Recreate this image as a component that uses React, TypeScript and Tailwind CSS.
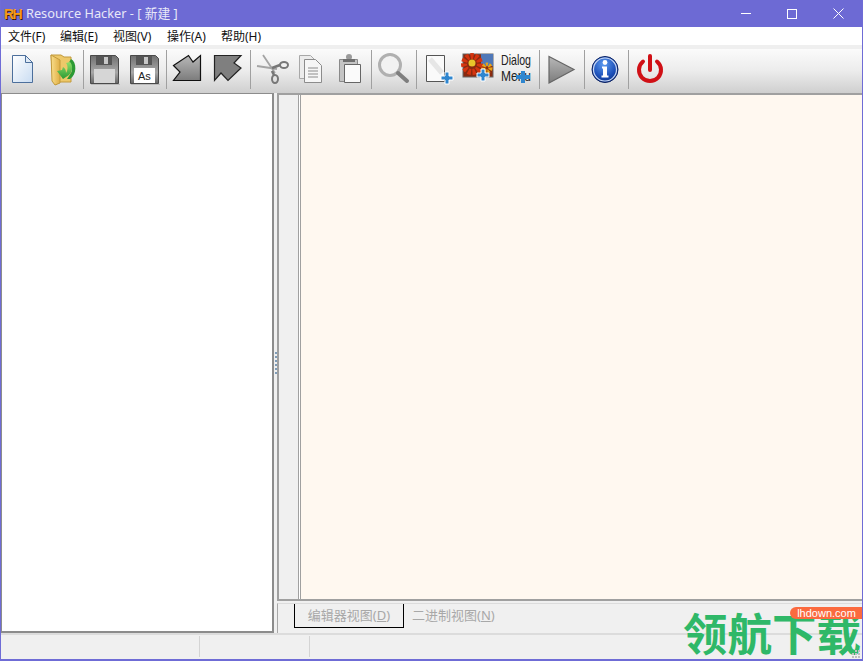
import type { ReactNode } from 'react'

const cjk = '"Noto Sans", "Noto Sans CJK SC", sans-serif'

function Defs() {
  return (
    <svg width="0" height="0" className="absolute">
      <defs>
        <linearGradient id="paper" x1="0" y1="0" x2="1" y2="1">
          <stop offset="0" stopColor="#ffffff" />
          <stop offset="1" stopColor="#c9dcf2" />
        </linearGradient>
        <linearGradient id="metal" x1="0" y1="0" x2="0" y2="1">
          <stop offset="0" stopColor="#b8b8b8" />
          <stop offset="1" stopColor="#7c7c7c" />
        </linearGradient>
        <linearGradient id="floppy" x1="0" y1="0" x2="0" y2="1">
          <stop offset="0" stopColor="#6f6f6f" />
          <stop offset="0.6" stopColor="#a8a8a8" />
          <stop offset="1" stopColor="#666" />
        </linearGradient>
        <linearGradient id="folder" x1="0" y1="0" x2="1" y2="0">
          <stop offset="0" stopColor="#f9de8c" />
          <stop offset="1" stopColor="#e0ae45" />
        </linearGradient>
        <radialGradient id="info" cx="0.45" cy="0.3" r="0.8">
          <stop offset="0" stopColor="#5d9bf0" />
          <stop offset="0.6" stopColor="#1c4fb8" />
          <stop offset="1" stopColor="#0a2a78" />
        </radialGradient>
        <linearGradient id="arrowgreen" x1="0" y1="0" x2="0" y2="1">
          <stop offset="0" stopColor="#8fe06a" />
          <stop offset="1" stopColor="#2c9a34" />
        </linearGradient>
      </defs>
    </svg>
  )
}

function Plus({ x, y }: { x: number; y: number }) {
  return (
    <path
      d={`M${x + 4} ${y}h4v4h4v4h-4v4h-4v-4h-4v-4h4z`}
      fill="#2f86cf"
      stroke="#fff"
      strokeWidth="1"
    />
  )
}

function Icon({ children }: { children: ReactNode }) {
  return (
    <svg width="36" height="36" viewBox="0 0 36 36" className="overflow-visible">
      {children}
    </svg>
  )
}

const NewIcon = () => (
  <Icon>
    <path d="M8.500 4.500h13l7 7v20h-20z" fill="url(#paper)" stroke="#4c6f9c" />
    <path d="M21.500 4.500v7h7z" fill="#dfeaf6" stroke="#4c6f9c" />
  </Icon>
)

const OpenIcon = () => (
  <Icon>
    <path d="M7 4h10l3 2h7v25H15l-3 3-3-4z" fill="#edc869" stroke="#c29a3c" />
    <path d="M7 4l9 5v23l-5 2-3-4z" fill="url(#folder)" stroke="#c29a3c" />
    <path d="M27 8c6 3 6 16-1 20h-3l4-6c2-3 1-8-3-9z" fill="#2c9a34" />
    <path d="M26 11c3 3 3 9-1 13l-6 4-6-8 5-1 1-3c2 1 3 3 3 6 2-3 2-8 0-10z" fill="url(#arrowgreen)" />
  </Icon>
)

const SaveIcon = ({ as }: { as?: boolean }) => (
  <Icon>
    <g transform="translate(-1 0)">
      <path d="M4.500 4.500h25l3 3v25h-28z" fill="url(#floppy)" stroke="#4a4a4a" />
      <path d="M10 5h16v9H10z" fill="#565656" />
      <path d="M18 6h4v7h-4z" fill="#c8c8c8" />
      {as ? (
        <>
          <rect x="8" y="17" width="21" height="15" fill="#fff" />
          <text x="12" y="29" fontSize="11" fontFamily="Liberation Sans" fill="#222">
            As
          </text>
        </>
      ) : (
        <rect x="8" y="18" width="21" height="14" fill="#d6d6d6" />
      )}
      <path d="M5 33.500h29" stroke="#bbb" />
    </g>
  </Icon>
)

const ImportIcon = () => (
  <Icon>
    <path
      d="M3.500 14.500 L18.500 4.500 L23 11 L30.500 4.500 L30.500 29.500 L3.500 29.500 L10 21 Z"
      fill="url(#metal)"
      stroke="#111"
      strokeWidth="1.200"
    />
  </Icon>
)

const ExportIcon = () => (
  <Icon>
    <path
      d="M4.500 4.500 L31 4.500 L24 12 L31 17 L18 29.500 L11 22 L4.500 29.500 Z"
      fill="#7f7f7f"
      stroke="#222"
      strokeWidth="1.200"
    />
  </Icon>
)

const CutIcon = () => (
  <Icon>
    <path d="M3 15l20 3M9 4l12 18" stroke="#a4a4a4" strokeWidth="1.800" fill="none" />
    <path d="M18 17l8-3M18 20l2 4" stroke="#777" strokeWidth="2.600" fill="none" />
    <ellipse cx="30" cy="14" rx="4" ry="3" fill="none" stroke="#777" strokeWidth="2" />
    <ellipse cx="21" cy="28" rx="3" ry="4" fill="none" stroke="#777" strokeWidth="2" />
  </Icon>
)

const CopyIcon = () => (
  <Icon>
    <path d="M6.500 4.500h11l4 4v19h-15z" fill="#ececec" stroke="#a8a8a8" />
    <path d="M11.500 8.500h11l6 6v17h-17z" fill="#f6f6f6" stroke="#8c8c8c" />
    <path d="M15 17h10M15 20h10M15 23h10M15 26h10" stroke="#8c8c8c" />
  </Icon>
)

const PasteIcon = () => (
  <Icon>
    <path d="M7.500 8.500h18v22h-18z" fill="#c4c4c4" stroke="#8a8a8a" />
    <circle cx="17" cy="6" r="3" fill="#9a9a9a" />
    <path d="M11 8h12v3H11z" fill="#6f6f6f" />
    <path d="M12.500 13.500h16v18h-16z" fill="#fafafa" stroke="#666" />
  </Icon>
)

const FindIcon = () => (
  <Icon>
    <circle cx="14" cy="14" r="10.500" fill="#f2f2f2" stroke="#b0b0b0" strokeWidth="3" />
    <path d="M22 22l9 8" stroke="#7e7e7e" strokeWidth="4" strokeLinecap="round" />
  </Icon>
)

const AddBlankIcon = () => (
  <Icon>
    <path d="M6.500 4.500h18v26h-18z" fill="#fafafa" stroke="#555" />
    <path d="M10 8l12 14" stroke="#e6e6e6" strokeWidth="5" />
    <Plus x={21} y={21} />
  </Icon>
)

const AddImageIcon = () => (
  <Icon>
    <rect x="3" y="3" width="30" height="23" fill="#8a2a10" stroke="#666" />
    <rect x="21" y="3" width="12" height="12" fill="#4f78b8" />
    <circle cx="12" cy="13" r="8" fill="none" stroke="#d5340f" strokeWidth="6" strokeDasharray="3 1.500" />
    <circle cx="12" cy="12" r="3.500" fill="#e8c52a" />
    <circle cx="27" cy="17" r="3.500" fill="none" stroke="#e9a314" strokeWidth="4" strokeDasharray="2 1" />
    <Plus x={17} y={18} />
  </Icon>
)

const AddDialogIcon = () => (
  <svg width="36" height="36" viewBox="0 0 36 36" className="overflow-visible">
    <g fontFamily="Liberation Sans" fill="#222">
      <text x="1" y="14" fontSize="15" textLength="30" lengthAdjust="spacingAndGlyphs">
        Dialog
      </text>
      <text x="1" y="30" fontSize="15" textLength="30" lengthAdjust="spacingAndGlyphs">
        Menu
      </text>
    </g>
    <path d="M21 20h4v4h5v4h-5v4h-4v-4h-5v-4h5z" fill="#2f86cf" />
  </svg>
)

const RunIcon = () => (
  <Icon>
    <path d="M5 5.500L30 18.500 5 32z" fill="url(#metal)" stroke="#666" strokeWidth="1.200" />
  </Icon>
)

const InfoIcon = () => (
  <Icon>
    <g transform="translate(-1 0)">
      <circle cx="18" cy="18.500" r="13" fill="url(#info)" stroke="#0b2060" />
      <circle cx="18" cy="18.500" r="11.500" fill="none" stroke="#c9d8f4" strokeWidth="1.200" />
      <circle cx="18" cy="11.500" r="2.400" fill="#fff" />
      <path d="M15 15.500h5v9h1.500v2h-7v-2H16v-7h-1z" fill="#fff" />
    </g>
  </Icon>
)

const PowerIcon = () => (
  <Icon>
    <path
      d="M11 10.500a11 11 0 1 0 14 0"
      fill="none"
      stroke="#d01016"
      strokeWidth="4"
      strokeLinecap="round"
    />
    <path d="M18 5v14" stroke="#d01016" strokeWidth="4" strokeLinecap="round" />
  </Icon>
)

function Tool({ children, w = 'w-[40px]' }: { children: ReactNode; w?: string }) {
  return <div className={`${w} h-[40px] flex items-center justify-center shrink-0`}>{children}</div>
}

function Sep({ w = 'w-[3px]' }: { w?: string }) {
  return (
    <div className={`${w} h-[39px] flex justify-center shrink-0`}>
      <div className="w-px h-full bg-[#a0a0a0]" />
    </div>
  )
}

export default function App() {
  return (
    <div
      className="relative w-[863px] h-[661px] flex flex-col overflow-hidden border border-[#6f6cd6] border-t-0 bg-[#f0f0f0]"
      style={{ fontFamily: cjk }}
    >
      <Defs />
      {/* title bar */}
      <div className="h-[27px] flex items-center bg-[#6d6ad4] text-white shrink-0">
        <span
          className="ml-[3px] w-[22px] text-[14px] leading-none font-bold text-[#f59a1c] tracking-[-1.500px]"
          style={{ fontFamily: '"Liberation Sans", sans-serif', textShadow: '1px 1px 0 #3a1a00' }}
        >
          RH
        </span>
        <span className="text-[12.750px] text-[#e8e8f8]">Resource Hacker - [ 新建 ]</span>
        <div className="ml-auto flex items-center text-white">
          <div className="w-[46px] h-[27px] flex items-center justify-center">
            <div className="w-[10px] h-px bg-white" />
          </div>
          <div className="w-[46px] h-[27px] flex items-center justify-center">
            <div className="w-[10px] h-[10px] border border-white" />
          </div>
          <div className="w-[46px] h-[27px] flex items-center justify-center mr-[1px]">
            <svg width="11" height="11" viewBox="0 0 11 11" stroke="white">
              <path d="M0.500 0.500l10 10M10.500 0.500l-10 10" />
            </svg>
          </div>
        </div>
      </div>

      {/* menu */}
      <div className="h-[18px] pt-[2px] flex items-center bg-white text-[12px] text-[#111] shrink-0">
        <span className="ml-[7px] w-[52px]">文件(F)</span>
        <span className="w-[53px]">编辑(E)</span>
        <span className="w-[54px]">视图(V)</span>
        <span className="w-[54px]">操作(A)</span>
        <span>帮助(H)</span>
      </div>

      {/* toolbar */}
      <div className="h-[47px] flex flex-col shrink-0">
        <div className="h-[4px] bg-[#efefef] shrink-0" />
        <div className="flex-1 flex items-center pl-px pb-[4px] bg-gradient-to-b from-[#fbfbfb] via-[#ececec] to-[#cfcfcf]">
          <Tool><NewIcon /></Tool>
          <Tool><OpenIcon /></Tool>
          <Sep />
          <Tool><SaveIcon /></Tool>
          <Tool><SaveIcon as /></Tool>
          <Sep />
          <Tool><ImportIcon /></Tool>
          <Tool><ExportIcon /></Tool>
          <Sep w="w-[4px]" />
          <Tool w="w-[39px]"><CutIcon /></Tool>
          <Tool w="w-[39px]"><CopyIcon /></Tool>
          <Tool w="w-[39px]"><PasteIcon /></Tool>
          <Sep w="w-[5px]" />
          <Tool><FindIcon /></Tool>
          <Sep w="w-[4px]" />
          <Tool><AddBlankIcon /></Tool>
          <Tool><AddImageIcon /></Tool>
          <Tool w="w-[39px]"><AddDialogIcon /></Tool>
          <Sep w="w-[5px]" />
          <Tool><RunIcon /></Tool>
          <Sep w="w-[4px]" />
          <Tool><InfoIcon /></Tool>
          <Sep w="w-[4px]" />
          <Tool><PowerIcon /></Tool>
        </div>
      </div>

      {/* main panes */}
      <div className="flex-1 flex min-h-0 pt-px">
        <div className="w-[273px] bg-white border-r-2 border-b-2 border-t border-l border-[#8c8c8c] shrink-0" />
        <div className="w-[3px] flex flex-col items-center justify-center gap-[2px] shrink-0">
          {[0, 1, 2, 3, 4, 5].map((i) => (
            <div key={i} className="w-[2px] h-[2px] bg-[#7f9db9]" />
          ))}
        </div>
        <div className="flex-1 flex flex-col min-w-0">
          <div className="h-[508px] flex border-t-2 border-b-2 border-[#a0a0a0] shrink-0">
            <div className="w-[21px] bg-[#f0f0f0] border-l-2 border-[#a0a0a0] shrink-0" />
            <div className="w-[1px] bg-[#a0a0a0] shrink-0" />
            <div className="w-px bg-white shrink-0" />
            <div className="flex-1 bg-[#fff8f0] border-l border-[#a0a0a0]" />
          </div>
          <div className="flex-1 border-l border-[#a8a8a8] mt-[2px] border-t border-t-[#dcdcdc] flex items-start text-[13px] text-[#a8a8a8]">
            <div className="ml-[16px] w-[110px] h-[24px] flex items-center justify-center border border-t-0 border-black">
              <span>
                编辑器视图(<span className="underline">D</span>)
              </span>
            </div>
            <div className="h-[24px] ml-[8px] flex items-center">
              <span>
                二进制视图(<span className="underline">N</span>)
              </span>
            </div>
          </div>
        </div>
      </div>

      {/* status bar */}
      <div className="h-[26px] flex border-t-2 border-[#dcdcdc] bg-[#f0f0f0] pb-[1px] shrink-0">
        <div className="w-[199px] border-r border-[#d4d4d4] my-[1px]" />
        <div className="w-[110px] border-r border-[#d4d4d4] my-[1px]" />
      </div>
      <div className="h-px bg-[#6f6cd6] shrink-0" />

      {/* site watermark */}
      <div
        className="absolute left-[682px] top-[606px] text-[44.500px] leading-[52px] font-bold text-[#2fb868] whitespace-nowrap"
        style={{ fontFamily: '"Noto Sans CJK SC", sans-serif' }}
      >
        领航下载
      </div>
      <div
        className="absolute left-[789px] top-[607px] w-[73px] h-[12px] rounded-l-[6px] bg-[#fb6a3f] text-white text-[11px] leading-[12px] text-center"
        style={{ fontFamily: '"Liberation Sans", sans-serif' }}
      >
        lhdown.com
      </div>
      <div className="absolute right-[2px] bottom-[2px] w-[8px] h-[8px] grid grid-cols-3 gap-px">
        {[0, 1, 2, 3, 4, 5, 6, 7, 8].map((i) => (
          <div key={i} className={i === 0 ? '' : 'bg-[#c0c0c0]'} />
        ))}
      </div>
    </div>
  )
}
